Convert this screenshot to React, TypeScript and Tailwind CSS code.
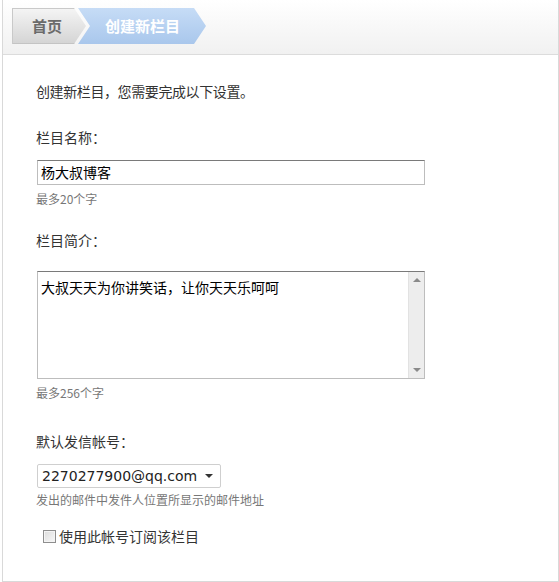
import React from "react";

const cjk = { fontFamily: '"Noto Sans CJK SC", "Noto Sans", sans-serif' };

export default function App() {
  return (
    <div className="w-[559px] h-[582px] bg-white pl-[2px]" style={cjk}>
      <div className="h-full border-l border-r border-b border-[#d9d9d9] flex flex-col">
        {/* header */}
        <div className="h-[55px] border-b border-[#dcdcdc] bg-gradient-to-b from-white to-[#f1f1f1] pt-[8px] pl-[9px] flex items-start">
          <div
            className="w-[74px] h-[36px] bg-gradient-to-b from-[#f5f5f5] to-[#d4d4d4] flex items-center pl-[20px] text-[15px] font-bold text-[#6b6b6b] shadow-[inset_1px_1px_0_#c9c9c9,inset_0_-1px_0_#c4c4c4]"
            style={{ clipPath: "polygon(0 0, 62px 0, 74px 18px, 62px 36px, 0 36px)" }}
          >
            首页
          </div>
          <div
            className="-ml-[8px] w-[128px] h-[36px] bg-gradient-to-b from-[#c6dcf6] to-[#a9c7ec] flex items-center pl-[27px] text-[15px] font-bold text-white"
            style={{ clipPath: "polygon(0 0, 116px 0, 128px 18px, 116px 36px, 0 36px, 12px 18px)" }}
          >
            创建新栏目
          </div>
        </div>

        {/* content */}
        <div className="pl-[33px] pt-[26px] text-[#333]">
          <div className="text-[14px] leading-[20px] tracking-[-0.4px]">创建新栏目，您需要完成以下设置。</div>

          <div className="mt-[26px] text-[14px] leading-[20px]">栏目名称：</div>
          <div className="mt-[13px] ml-[1px] w-[388px] h-[25px] border border-[#bdbdbd] border-t-[#7a7a7a] flex items-center pl-[3px] text-[14px] text-black">
            杨大叔博客
          </div>
          <div className="mt-[6px] text-[12px] leading-[16px] text-[#777]">最多20个字</div>

          <div className="mt-[23px] text-[14px] leading-[20px]">栏目简介：</div>
          <div className="mt-[21px] ml-[1px] w-[388px] h-[108px] border border-[#bdbdbd] border-t-[#7a7a7a] flex">
            <div className="flex-1 pl-[3px] pt-[5px] text-[14px] leading-[20px] text-black">
              大叔天天为你讲笑话，让你天天乐呵呵
            </div>
            <div className="w-[16px] bg-[#ededed] border-l border-[#e2e2e2] flex flex-col items-center justify-between py-[6px]">
              <div className="w-0 h-0 border-l-[4px] border-r-[4px] border-b-[4px] border-l-transparent border-r-transparent border-b-[#8a8a8a]" />
              <div className="w-0 h-0 border-l-[4px] border-r-[4px] border-t-[4px] border-l-transparent border-r-transparent border-t-[#8a8a8a]" />
            </div>
          </div>
          <div className="mt-[6px] text-[12px] leading-[16px] text-[#777]">最多256个字</div>

          <div className="mt-[30px] text-[14px] leading-[20px]">默认发信帐号：</div>
          <div className="mt-[13px] ml-[1px] w-[184px] h-[24px] border border-[#cfcfcf] rounded-[2px] flex items-center pl-[4px] pr-[7px] justify-between">
            <span className="text-[14px] text-[#222]" style={{ fontFamily: '"DejaVu Sans", sans-serif' }}>
              2270277900@qq.com
            </span>
            <div className="w-0 h-0 border-l-[4px] border-r-[4px] border-t-[4px] border-l-transparent border-r-transparent border-t-[#333]" />
          </div>
          <div className="mt-[4px] text-[12px] leading-[16px] text-[#777]">发出的邮件中发件人位置所显示的邮件地址</div>

          <div className="mt-[18px] ml-[7px] flex items-center gap-[3px]">
            <div className="w-[13px] h-[13px] border border-[#8e8e8e] bg-gradient-to-br from-[#dcdcdc] to-[#f8f8f8] shadow-[inset_0_0_0_1px_#f4f4f4]" />
            <span className="text-[14px] leading-[20px] text-[#333]">使用此帐号订阅该栏目</span>
          </div>
        </div>
      </div>
    </div>
  );
}
